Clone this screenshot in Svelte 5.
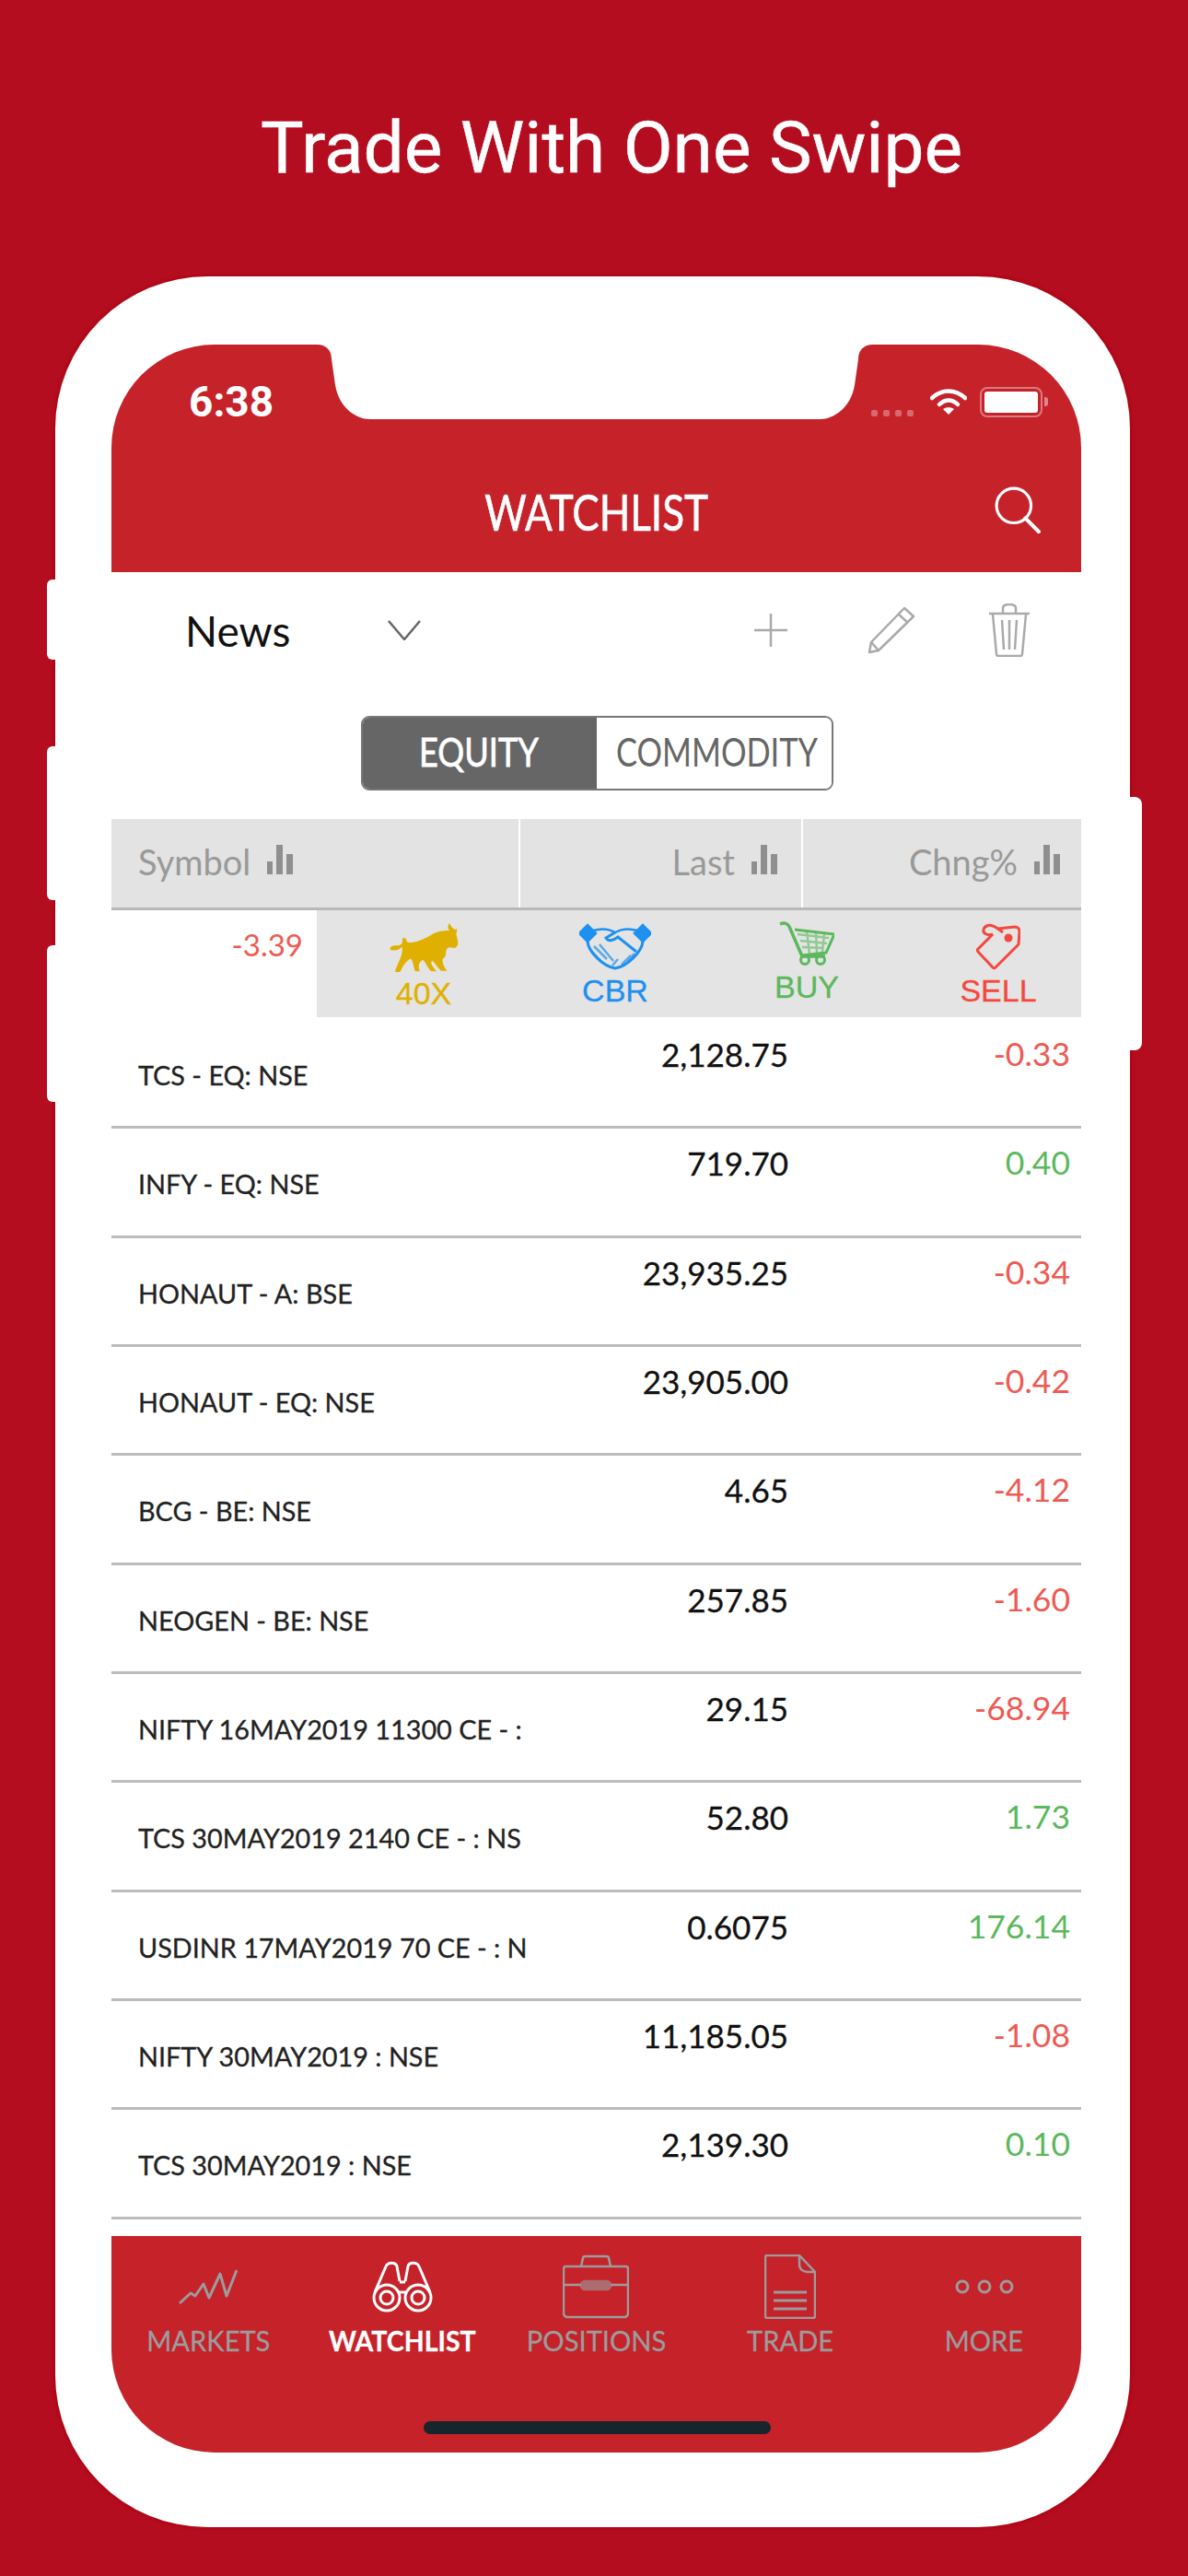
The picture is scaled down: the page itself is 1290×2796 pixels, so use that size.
<script>
  const rows = [
    ['TCS - EQ: NSE', '2,128.75', '-0.33', 'down'],
    ['INFY - EQ: NSE', '719.70', '0.40', 'up'],
    ['HONAUT - A: BSE', '23,935.25', '-0.34', 'down'],
    ['HONAUT - EQ: NSE', '23,905.00', '-0.42', 'down'],
    ['BCG - BE: NSE', '4.65', '-4.12', 'down'],
    ['NEOGEN - BE: NSE', '257.85', '-1.60', 'down'],
    ['NIFTY 16MAY2019 11300 CE - :', '29.15', '-68.94', 'down'],
    ['TCS 30MAY2019 2140 CE - : NS', '52.80', '1.73', 'up'],
    ['USDINR 17MAY2019 70 CE - : N', '0.6075', '176.14', 'up'],
    ['NIFTY 30MAY2019 : NSE', '11,185.05', '-1.08', 'down'],
    ['TCS 30MAY2019 : NSE', '2,139.30', '0.10', 'up']
  ];
  const heads = [
    { label: 'Symbol', cls: 'sym' },
    { label: 'Last', cls: 'last' },
    { label: 'Chng%', cls: 'chg' }
  ];
</script>

<div class="page">
  <h1 class="title">Trade With One Swipe</h1>

  <div class="phone">
    <span class="btn btn-l1"></span>
    <span class="btn btn-l2"></span>
    <span class="btn btn-l3"></span>
    <span class="btn btn-r"></span>

    <div class="screen">
      <svg class="notch" viewBox="0 0 632 81" width="632" height="81" aria-hidden="true">
        <path d="M14 0C24 0 30 6 30 16L34 44C38 68 56 81 72 81L560 81C576 81 594 68 598 44L602 16C602 6 608 0 618 0Z" fill="#fff" />
      </svg>

      <header class="appbar">
        <div class="status">
          <span class="time">6:38</span>
          <div class="status-right">
            <span class="dots"><i></i><i></i><i></i><i></i></span>
            <svg class="wifi" viewBox="0 0 40 30" width="40" height="30">
              <path d="M2 11C13 1 27 1 38 11" fill="none" stroke="#fff" stroke-width="4.5" stroke-linecap="round" />
              <path d="M10 18C16 12 24 12 30 18" fill="none" stroke="#fff" stroke-width="4.5" stroke-linecap="round" />
              <path d="M20 29L14 23C17 20.500 23 20.500 26 23Z" fill="#fff" />
            </svg>
            <span class="battery"><b></b></span>
            <span class="nub"></span>
          </div>
        </div>
        <div class="titlebar">
          <span class="bar-title"><span>WATCHLIST</span></span>
          <svg class="search" viewBox="0 0 50 50" width="52" height="52">
            <circle cx="21" cy="21" r="18" fill="none" stroke="#fff" stroke-width="3" />
            <path d="M33 34L47 48" stroke="#fff" stroke-width="4" stroke-linecap="round" />
          </svg>
        </div>
      </header>

      <div class="toolbar">
        <span class="list-name">News</span>
        <svg class="chevron" viewBox="0 0 36 22" width="36" height="22">
          <path d="M1 1L18 21L35 1" fill="none" stroke="#666" stroke-width="2.5" />
        </svg>
        <svg class="plus" viewBox="0 0 36 36" width="36" height="36">
          <path d="M18 0V36M0 18H36" stroke="#aaa" stroke-width="2.500" />
        </svg>
        <svg class="pencil" viewBox="0 0 52 52" width="52" height="52">
          <path d="M40 2L50 11L12 48L2 50L4 39Z M34 9L44 18 M4 39L12 48" fill="none" stroke="#aaa" stroke-width="2.500" stroke-linejoin="round" />
        </svg>
        <svg class="trash" viewBox="0 0 46 58" width="46" height="58">
          <path d="M1 11H45M16 10V5C16 2 18 1 23 1C28 1 30 2 30 5V10M5 12L9 55C9 56 10 57 11 57H35C36 57 37 56 37 55L41 12M15 18L17 50M23 18V50M31 18L29 50" fill="none" stroke="#aaa" stroke-width="2.500" />
        </svg>
      </div>

      <div class="segment">
        <span class="seg on"><span>EQUITY</span></span>
        <span class="seg off"><span>COMMODITY</span></span>
      </div>

      <div class="thead">
        {#each heads as h}
          <div class="th {h.cls}">
            <span>{h.label}</span>
            <svg viewBox="0 0 29 32" width="29" height="32">
              <path d="M1 18H7V32H1ZM11 0H18V32H11ZM22 10H29V32H22Z" fill="#8f8f8f" />
            </svg>
          </div>
        {/each}
      </div>

      <div class="swipe">
        <div class="swipe-cell"><span class="down">-3.39</span></div>
        <div class="actions">
          <div class="act gold">
            <svg viewBox="275 55 235 170" width="78" height="56">
              <path d="M282 148C282 135 295 135 305 135C320 135 325 125 322 112L332 110C338 120 335 125 345 125C370 125 400 112 425 95C445 85 465 85 478 85C470 78 472 68 478 62C482 72 488 78 495 82L503 80L500 100C505 115 510 130 500 140C490 148 480 135 470 145C462 155 470 165 460 175C450 180 455 200 470 218L450 218C435 205 430 190 420 185C412 195 425 205 435 220L418 220C405 210 400 190 390 182C380 190 372 195 380 220L365 220C358 205 360 190 350 178C335 185 325 200 315 222L298 222C305 195 325 170 322 140C310 148 300 155 282 148Z" fill="currentColor" />
            </svg>
            <span>40X</span>
          </div>
          <div class="act blue">
            <svg viewBox="0 0 78 50" width="78" height="50" fill="none" stroke="currentColor" stroke-width="2.500">
              <path d="M0 10L9 1L18 10L9 19Z M60 10L69 1L78 10L69 19Z" fill="currentColor" />
              <path d="M15 7C25 4 32 5 39 9C46 5 53 4 63 7" />
              <path d="M39 9L29 15C32 20 38 17 42 14L62 30" stroke-width="3" />
              <path d="M9 19C10 30 26 46 39 48C52 46 68 30 69 19" stroke-width="3" />
              <path d="M16 24L30 38M22 22L37 40M12 28L25 42M52 40L60 32M46 44L56 34M36 45L42 38" stroke-width="2.500" opacity=".7" />
            </svg>
            <span>CBR</span>
          </div>
          <div class="act green up-shift">
            <svg viewBox="0 0 60 48" width="60" height="48" fill="none" stroke="currentColor" stroke-width="3">
              <path d="M1 3C6 1 10 2 12 8L25 38H50" stroke-width="3.500" />
              <path d="M17 9L60 14L51 34L25 37" />
              <path d="M20 14L54 18M23 21L52 24M25 28L48 29M30 11L33 35M40 12L41 35M49 14L47 33" stroke-width="2.500" opacity=".6" />
              <circle cx="28" cy="42" r="4.500" />
              <circle cx="45" cy="42" r="4.500" />
            </svg>
            <span>BUY</span>
          </div>
          <div class="act red">
            <svg viewBox="0 0 48 50" width="48" height="50" fill="none" stroke="currentColor" stroke-width="3">
              <path d="M24 5L42 3C45 3 47 5 47 8L46 22L21 47C20 48 19 48 18 47L2 30C1 29 1 28 2 27L18 11" stroke-linejoin="round" />
              <path d="M18 11C12 13 7 10 8 6C9 2 14 0 18 2C21 3 24 5 29 9" />
              <circle cx="35" cy="15" r="4.500" fill="currentColor" stroke="none" />
            </svg>
            <span>SELL</span>
          </div>
        </div>
      </div>

      <div class="rows">
        {#each rows as r}
          <div class="row">
            <div class="symbol">{r[0]}</div>
            <div class="num">{r[1]}</div>
            <div class="pct {r[3]}">{r[2]}</div>
          </div>
        {/each}
      </div>

      <nav class="tabs">
        <div class="tab">
          <svg viewBox="0 0 64 40" width="64" height="40" fill="none" stroke="currentColor" stroke-width="3" stroke-linejoin="round">
            <path d="M1 38L13 27L18 30L27 17L33 32L45 6L52 30L63 2" />
          </svg>
          <span>MARKETS</span>
        </div>
        <div class="tab active">
          <svg viewBox="0 0 66 56" width="66" height="56" fill="none" stroke="currentColor" stroke-width="3">
            <circle cx="16" cy="40" r="14" />
            <circle cx="16" cy="40" r="7" />
            <circle cx="50" cy="40" r="14" />
            <circle cx="50" cy="40" r="7" />
            <path d="M3 34L15 6C17 1 26 1 27 6L30 22M63 34L51 6C49 1 40 1 39 6L36 22M30 23H36M29 34H37" />
          </svg>
          <span>WATCHLIST</span>
        </div>
        <div class="tab">
          <svg viewBox="0 0 72 68" width="72" height="68" fill="none" stroke="currentColor" stroke-width="2.500">
            <path d="M3 12H69C70 12 71 13 71 15V63C71 65 69 67 67 67H5C3 67 1 65 1 63V15C1 13 2 12 3 12Z" />
            <path d="M20 12L22 3C22 2 23 1 25 1H47C49 1 50 2 50 3L52 12" />
            <path d="M1 32H20M52 32H71" />
            <rect x="20" y="28" width="32" height="9" rx="4" fill="currentColor" opacity=".6" />
          </svg>
          <span>POSITIONS</span>
        </div>
        <div class="tab">
          <svg viewBox="0 0 56 70" width="56" height="70" fill="none" stroke="currentColor" stroke-width="2.500">
            <path d="M3 1H38L55 19V67C55 68 54 69 53 69H3C2 69 1 68 1 67V3C1 2 2 1 3 1Z" />
            <path d="M38 1V11C38 16 42 19 47 19H55" />
            <path d="M10 41H46M10 50H46M10 59H46" stroke-width="3" />
          </svg>
          <span>TRADE</span>
        </div>
        <div class="tab">
          <svg class="more-icon" viewBox="0 0 64 16" width="64" height="16" fill="none" stroke="currentColor" stroke-width="3">
            <circle cx="8" cy="8" r="6" />
            <circle cx="32" cy="8" r="6" />
            <circle cx="56" cy="8" r="6" />
          </svg>
          <span>MORE</span>
        </div>
        <span class="home"></span>
      </nav>
    </div>
  </div>
</div>

<style>
  :global(body) {
    margin: 0;
    background: #b50d20;
  }
  .page {
    width: 1290px;
    height: 2796px;
    overflow: hidden;
    background: #b50d20;
    font-family: Lato, "Liberation Sans", sans-serif;
  }
  .title {
    margin: 0;
    height: 300px;
    padding: 115px 0 0 38px;
    box-sizing: border-box;
    text-align: center;
    color: #fff;
    font-family: Roboto, "Liberation Sans", sans-serif;
    font-weight: 400;
    font-size: 78.4px;
    line-height: 90px;
    -webkit-text-stroke: 0.5px #fff;
  }
  .phone {
    position: relative;
    width: 1167px;
    height: 2443px;
    margin-left: 60px;
    padding: 74px 53px 81px 61px;
    box-sizing: border-box;
    background: #fff;
    border-radius: 165px;
    box-shadow: 0 0 4px 1px #a8000c;
  }
  .btn {
    position: absolute;
    background: #fff;
  }
  .btn-l1, .btn-l2, .btn-l3 {
    left: -9px;
    width: 10px;
    border-radius: 6px 0 0 6px;
  }
  .btn-l1 { top: 329px; height: 87px; }
  .btn-l2 { top: 510px; height: 167px; }
  .btn-l3 { top: 726px; height: 170px; }
  .btn-r {
    right: -13px;
    top: 565px;
    width: 14px;
    height: 275px;
    border-radius: 0 8px 8px 0;
  }
  .screen {
    position: relative;
    width: 1053px;
    height: 2288px;
    display: flex;
    flex-direction: column;
    background: #fff;
    border-radius: 112px;
    overflow: hidden;
  }
  .notch {
    position: absolute;
    top: 0;
    left: 209px;
    display: block;
  }
  .appbar {
    height: 247px;
    flex: none;
    background: #c5222a;
    color: #fff;
  }
  .status {
    height: 124px;
    padding: 36px 0 0 84px;
    box-sizing: border-box;
    display: flex;
    justify-content: space-between;
  }
  .time {
    font-family: Roboto, "Liberation Sans", sans-serif;
    font-weight: 700;
    font-size: 46px;
    line-height: 52px;
  }
  .status-right {
    display: flex;
    align-items: center;
    height: 36px;
    margin-top: 8px;
    padding-right: 36px;
  }
  .dots {
    display: flex;
    gap: 6px;
    margin: 24px 18px 0 0;
  }
  .dots i {
    width: 7px;
    height: 7px;
    border-radius: 2px;
    background: rgba(255, 255, 255, 0.32);
  }
  .wifi {
    display: block;
    margin-right: 14px;
  }
  .battery {
    width: 68px;
    height: 33px;
    box-sizing: border-box;
    padding: 3px;
    border: 2px solid rgba(255, 255, 255, 0.4);
    border-radius: 8px;
    display: block;
  }
  .battery b {
    display: block;
    height: 100%;
    background: #fff;
    border-radius: 3px;
  }
  .nub {
    width: 4px;
    height: 10px;
    margin-left: 2px;
    border-radius: 0 3px 3px 0;
    background: rgba(255, 255, 255, 0.45);
  }
  .titlebar {
    position: relative;
    height: 119px;
    display: flex;
    align-items: flex-start;
    justify-content: center;
  }
  .bar-title {
    margin-top: 24px;
    font-size: 55px;
    line-height: 66px;
    -webkit-text-stroke: 0.7px #fff;
  }
  .bar-title span {
    display: inline-block;
    transform: scaleX(0.8);
  }
  .search {
    position: absolute;
    right: 43px;
    top: 29px;
  }
  .toolbar {
    height: 126px;
    flex: none;
    display: flex;
    align-items: center;
    padding-left: 80px;
    box-sizing: border-box;
  }
  .toolbar svg {
    display: block;
    flex: none;
  }
  .list-name {
    width: 220px;
    font-size: 46px;
    color: #111;
  }
  .plus { margin-left: 362px; }
  .pencil { margin-left: 87px; }
  .trash { margin-left: 79px; }
  .segment {
    align-self: flex-start;
    flex: none;
    margin: 30px 0 31px 271px;
    width: 513px;
    height: 81px;
    box-sizing: border-box;
    display: grid;
    grid-template-columns: 254px 255px;
    border: 2px solid #777;
    border-radius: 9px;
    overflow: hidden;
  }
  .seg {
    display: flex;
    align-items: center;
    font-size: 43px;
    color: #666;
    background: #fff;
    min-width: 0;
  }
  .seg span {
    display: inline-block;
    margin-top: -4px;
    transform: scaleX(0.8);
    transform-origin: left center;
  }
  .seg.off {
    padding-left: 21px;
  }
  .seg.on {
    padding-left: 61px;
    background: #666;
    color: #fff;
    -webkit-text-stroke: 0.8px #fff;
  }
  .seg.on span {
    transform: scaleX(0.84);
  }
  .thead {
    flex: none;
    height: 99px;
    box-sizing: border-box;
    display: grid;
    grid-template-columns: 442px 307px 304px;
    background: #e3e3e3;
    border-bottom: 3px solid #b8b8b8;
  }
  .th {
    display: flex;
    align-items: center;
    gap: 17px;
    font-size: 38px;
    color: #999;
    border-left: 2px solid #fff;
    box-sizing: border-box;
    padding-bottom: 4px;
  }
  .th svg { display: block; margin-bottom: 4px; }
  .th.sym { padding-left: 29px; border-left: 0; }
  .th.last { justify-content: flex-end; padding-right: 26px; }
  .th.chg { justify-content: flex-end; padding-right: 23px; }
  .swipe {
    flex: none;
    height: 116px;
    display: flex;
  }
  .swipe-cell {
    flex: none;
    width: 223px;
    box-sizing: border-box;
    text-align: right;
    padding: 15px 15px 0 0;
    font-size: 33px;
    line-height: 44px;
    background: #fff;
  }
  .actions {
    flex: 1;
    min-width: 0;
    display: grid;
    grid-template-columns: repeat(4, 208px);
    padding-left: 12px;
    background: #e4e4e4;
  }
  .act {
    display: flex;
    flex-direction: column;
    align-items: center;
    padding-top: 12px;
    font-family: "Liberation Sans", Arial, sans-serif;
    font-size: 34px;
    line-height: 38px;
    -webkit-text-stroke: 0.3px currentColor;
  }
  .act svg {
    display: block;
    height: 56px;
  }
  .act.up-shift {
    margin-top: -4px;
  }
  .act.gold span {
    margin-top: 3px;
  }
  .gold { color: #e0b000; }
  .blue { color: #1e90f0; }
  .green { color: #5cb85c; }
  .red { color: #f4483e; }
  .rows {
    flex: 1;
    min-height: 0;
    padding-top: 3px;
    overflow: hidden;
  }
  .row {
    height: 118.35px;
    box-sizing: border-box;
    display: grid;
    grid-template-columns: 442px 307px 304px;
    border-bottom: 3px solid #bcbcbc;
    white-space: nowrap;
  }
  .symbol {
    padding: 40px 0 0 29px;
    font-size: 28.8px;
    line-height: 40px;
    color: #222;
    -webkit-text-stroke: 0.3px #222;
  }
  .num {
    padding: 15px 14px 0 0;
    text-align: right;
    font-size: 35px;
    line-height: 44px;
    color: #111;
    -webkit-text-stroke: 0.3px #111;
  }
  .pct {
    padding: 15px 12px 0 0;
    text-align: right;
    font-size: 35.5px;
    line-height: 44px;
  }
  .down { color: #ee5a52; }
  .up { color: #5cb85c; }
  .tabs {
    position: relative;
    flex: none;
    height: 235px;
    display: grid;
    grid-template-columns: repeat(5, 1fr);
    align-items: start;
    background: #c5222a;
  }
  .tab {
    display: flex;
    flex-direction: column;
    align-items: center;
    color: #9c9c9c;
    font-size: 31px;
    -webkit-text-stroke: 0.3px currentColor;
  }
  .tab svg {
    display: block;
    height: 70px;
    margin-top: 20px;
  }
  .tab span {
    line-height: 36px;
    margin-top: 5px;
    display: inline-block;
    transform: scaleX(0.94);
  }
  .tab.active {
    color: #fff;
    font-weight: 700;
  }
  .tab.active span {
    transform: scaleX(0.92);
  }
  .home {
    position: absolute;
    left: 339px;
    bottom: 20px;
    width: 377px;
    height: 14px;
    border-radius: 7px;
    background: #16262a;
  }
</style>
